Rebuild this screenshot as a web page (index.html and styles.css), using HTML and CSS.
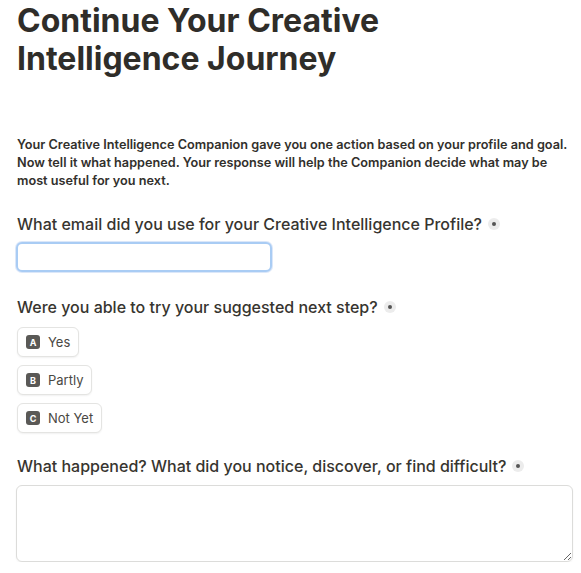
FILE: index.html
```html
<!DOCTYPE html>
<html lang="en">
<head>
<meta charset="utf-8">
<title>Continue Your Creative Intelligence Journey</title>
<link rel="stylesheet" href="styles.css">
</head>
<body>
<main class="page">
  <h1 class="title">Continue Your Creative Intelligence Journey</h1>
  <p class="intro">Your Creative Intelligence Companion gave you one action based on your profile and goal. Now tell it what happened. Your response will help the Companion decide what may be most useful for you next.</p>

  <section class="field">
    <label class="label" for="email">What email did you use for your Creative Intelligence Profile? <span class="req"><span class="req-dot"></span></span></label>
    <input class="text-input" id="email" type="email">
  </section>

  <section class="field field-gap">
    <div class="label">Were you able to try your suggested next step? <span class="req"><span class="req-dot"></span></span></div>
    <div class="options">
      <div class="option"><span class="key">A</span><span class="opt-text">Yes</span></div>
      <div class="option"><span class="key">B</span><span class="opt-text">Partly</span></div>
      <div class="option"><span class="key">C</span><span class="opt-text">Not Yet</span></div>
    </div>
  </section>

  <section class="field field-last">
    <label class="label" for="happened">What happened? What did you notice, discover, or find difficult? <span class="req"><span class="req-dot"></span></span></label>
    <textarea class="text-area" id="happened"></textarea>
  </section>
</main>
</body>
</html>
```

FILE: styles.css
```css
html, body {
  margin: 0;
  padding: 0;
  background: #ffffff;
}

body {
  font-family: Inter, "Noto Sans", "Liberation Sans", sans-serif;
  color: #37352f;
}

.page {
  padding: 2px 4px 0 17px;
}

.title {
  margin: 0;
  max-width: 520px;
  font-size: 32px;
  line-height: 38px;
  font-weight: 750;
  color: #2f2d29;
}

.intro {
  margin: 58px 0 0;
  font-size: 12.7px;
  line-height: 18px;
  font-weight: 600;
  color: #32302c;
}

.field {
  margin-top: 24px;
}

.field-gap {
  margin-top: 25px;
}

.field-last {
  margin-top: 23px;
}

.label {
  display: flex;
  align-items: center;
  gap: 6px;
  font-size: 16px;
  line-height: 20px;
  font-weight: 500;
  color: #37352f;
}

.req {
  display: inline-flex;
  align-items: center;
  justify-content: center;
  width: 12px;
  height: 12px;
  border-radius: 50%;
  background: #ececec;
}

.req-dot {
  width: 4px;
  height: 4px;
  border-radius: 50%;
  background: #555;
}

.text-input {
  display: block;
  box-sizing: border-box;
  margin: 8px 0 0 -1px;
  width: 256px;
  height: 30px;
  border: 2px solid #a9ccf4;
  border-radius: 6px;
  background: #fff;
  outline: none;
  box-shadow: 0 0 0 1px rgba(110, 160, 230, 0.25);
}

.options {
  display: flex;
  flex-direction: column;
  align-items: flex-start;
  gap: 8px;
  margin-top: 10px;
}

.option {
  display: flex;
  align-items: center;
  gap: 8px;
  box-sizing: border-box;
  height: 30px;
  padding: 0 8px;
  border: 1px solid #e4e4e2;
  border-radius: 6px;
  background: #fff;
  box-shadow: 0 1px 2px rgba(0, 0, 0, 0.06);
}

.key {
  display: inline-flex;
  align-items: center;
  justify-content: center;
  width: 14px;
  height: 14px;
  border-radius: 3px;
  background: #5a5956;
  color: #fff;
  font-size: 9px;
  font-weight: 700;
  line-height: 1;
}

.opt-text {
  font-size: 13px;
  color: #4a4843;
}

.text-area {
  display: block;
  box-sizing: border-box;
  margin: 9px 0 0 -1px;
  width: 557px;
  height: 77px;
  border: 1px solid #dcdcda;
  border-radius: 6px;
  background: #fff;
  outline: none;
  resize: vertical;
  box-shadow: 0 1px 2px rgba(0, 0, 0, 0.05);
}
```
